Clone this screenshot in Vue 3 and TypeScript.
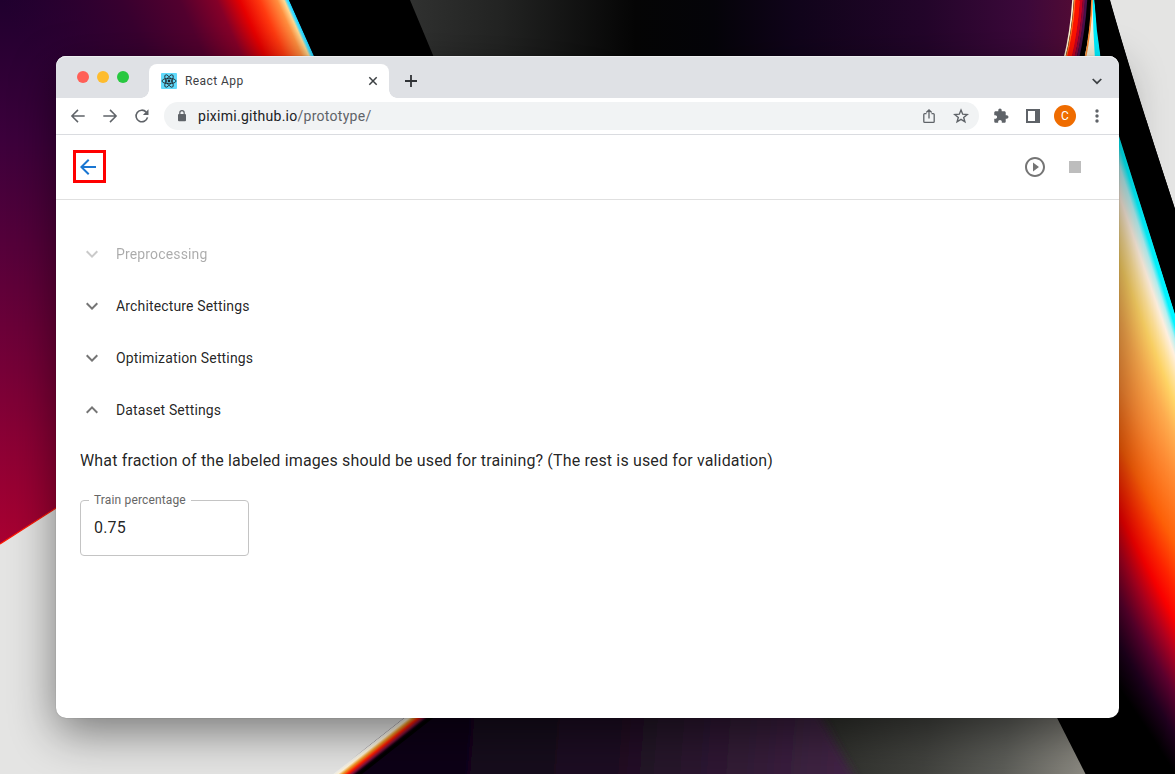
<script setup lang="ts">
interface Section {
  title: string
  open: boolean
  disabled: boolean
}

const sections: Section[] = [
  { title: 'Preprocessing', open: false, disabled: true },
  { title: 'Architecture Settings', open: false, disabled: false },
  { title: 'Optimization Settings', open: false, disabled: false },
  { title: 'Dataset Settings', open: true, disabled: false },
]

// Colour bands of the wallpaper's right-hand glow: [colour, y at the left end, y at the right end]
const glow: [string, number, number][] = [
  ['#000000', 135, 314],
  ['#00f4ff', 137, 316],
  ['#00f4ff', 146, 328],
  ['#b4f0f2', 166, 342],
  ['#fff0e0', 196, 358],
  ['#ffe29a', 230, 382],
  ['#ffd566', 262, 404],
  ['#ffae50', 320, 438],
  ['#ff8c34', 385, 478],
  ['#ff6008', 445, 545],
  ['#ff2200', 490, 590],
  ['#fb0000', 515, 622],
  ['#b00020', 555, 655],
  ['#5c002e', 600, 695],
  ['#20001e', 645, 735],
  ['#000000', 690, 774],
]
const glowLeft = 1110
const strips = Array.from({ length: 65 }, (_, i) => {
  const x = glowLeft + i
  const t = (x - 1119) / 56
  return {
    x,
    stops: glow.map(([color, a, b]) => ({ color, offset: Math.max(0, (a + (b - a) * t) / 774) })),
  }
})
</script>

<template>
  <main class="desktop">
    <svg class="wallpaper" width="1175" height="774" viewBox="0 0 1175 774" aria-hidden="true">
      <defs>
        <linearGradient id="left" x1="0" y1="0" x2="0" y2="1">
          <stop offset="0" stop-color="#20002e" />
          <stop offset=".25" stop-color="#3b003b" />
          <stop offset=".45" stop-color="#55003a" />
          <stop offset=".68" stop-color="#760037" />
          <stop offset="1" stop-color="#a90031" />
        </linearGradient>
        <linearGradient id="flare" gradientUnits="userSpaceOnUse" x1="49" y1="107" x2="288.500" y2="0">
          <stop offset="0" stop-color="#2c0032" stop-opacity="0" />
          <stop offset=".42" stop-color="#38002f" />
          <stop offset=".62" stop-color="#52002e" />
          <stop offset=".75" stop-color="#850028" />
          <stop offset=".83" stop-color="#e60000" />
          <stop offset=".9" stop-color="#ff3b10" />
          <stop offset=".96" stop-color="#ff9040" />
          <stop offset=".984" stop-color="#ffd890" />
          <stop offset=".993" stop-color="#48ddff" />
          <stop offset="1" stop-color="#18d8ff" />
        </linearGradient>
        <linearGradient id="topdark" gradientUnits="userSpaceOnUse" x1="410" y1="0" x2="1072" y2="0">
          <stop offset="0" stop-color="#303130" />
          <stop offset=".14" stop-color="#222322" />
          <stop offset=".34" stop-color="#050505" />
          <stop offset=".46" stop-color="#050409" />
          <stop offset=".58" stop-color="#10041a" />
          <stop offset=".78" stop-color="#23052a" />
          <stop offset=".93" stop-color="#3c083a" />
          <stop offset="1" stop-color="#500b35" />
        </linearGradient>
        <linearGradient id="bottomdark" gradientUnits="userSpaceOnUse" x1="400" y1="740" x2="850" y2="774">
          <stop offset="0" stop-color="#0b0215" />
          <stop offset=".5" stop-color="#201024" />
          <stop offset="1" stop-color="#422546" />
        </linearGradient>
        <linearGradient id="bottomgrey" gradientUnits="userSpaceOnUse" x1="820" y1="730" x2="1085" y2="760">
          <stop offset="0" stop-color="#2c2d29" />
          <stop offset=".4" stop-color="#41423e" />
          <stop offset=".7" stop-color="#5c5d58" />
          <stop offset="1" stop-color="#8b8981" />
        </linearGradient>
        <linearGradient id="seam" gradientUnits="userSpaceOnUse" x1="334" y1="774" x2="343.300" y2="785.800">
          <stop offset="0" stop-color="#f0eee8" />
          <stop offset=".16" stop-color="#fff4d8" />
          <stop offset=".34" stop-color="#f09a28" />
          <stop offset=".55" stop-color="#ff1a00" />
          <stop offset=".74" stop-color="#80103a" />
          <stop offset=".9" stop-color="#10000e" />
          <stop offset="1" stop-color="#000" />
        </linearGradient>
        <linearGradient v-for="s in strips" :id="`glow${s.x}`" :key="s.x" gradientUnits="userSpaceOnUse" x1="0" y1="0" x2="0" y2="774">
          <stop v-for="(p, i) in s.stops" :key="i" :offset="p.offset" :stop-color="p.color" />
        </linearGradient>
        <filter id="soft" x="-10%" y="-10%" width="120%" height="120%"><feGaussianBlur stdDeviation="4" /></filter>
      </defs>
      <rect width="1175" height="774" fill="#e4e4e3" />
      <path d="M0 0H330V390L0 544Z" fill="url(#left)" />
      <path d="M0 0H289L336.300 106H0Z" fill="url(#flare)" />
      <path d="M289 0H1110Q1131 75 1175 209V774H335L560 594L336.300 106Z" fill="#000" />
      <path d="M410 0H1073Q1071 32 1064 60H435Z" fill="url(#topdark)" />
      <g fill="none">
        <path d="M1073 0Q1071 32 1064 60" stroke="#fff2cf" stroke-width="1.600" />
        <path d="M1075 0Q1073 32 1066 60" stroke="#ff6a20" stroke-width="2" />
        <path d="M1078 0Q1076 32 1069 60" stroke="#ff1400" stroke-width="5" />
        <path d="M1081.500 0Q1079.500 32 1072.500 60" stroke="#c80020" stroke-width="3" />
        <path d="M1084 0Q1082 32 1075 60" stroke="#85083c" stroke-width="2.500" />
        <path d="M1086 0Q1084 32 1077.500 60" stroke="#48104a" stroke-width="2.500" />
      </g>
      <path d="M1092 0Q1091 30 1084 60H1101Q1096 30 1094.500 0Z" fill="#00efff" />
      <path d="M1092 0Q1091 30 1084 60H1095Q1093 30 1092.500 0Z" fill="#f5efd8" />
      <path d="M1092 0Q1091 30 1085 60" fill="none" stroke="#ff8a30" stroke-width="1.600" />
      <rect v-for="s in strips" :key="s.x" :x="s.x" y="120" width="1" height="654" :fill="`url(#glow${s.x})`" shape-rendering="crispEdges" />
      <path d="M1110 0Q1131 75 1175 209V0Z" fill="#e4e4e3" />
      <path d="M1110 0Q1131 75 1175 209V314L1119 136L1101 60L1094.500 0Z" fill="#000" />
      <path d="M790 700H1048L1085.500 774H790Z" fill="url(#bottomgrey)" />
      <path d="M380 690H806L858 784H350Z" fill="url(#bottomdark)" filter="url(#soft)" />
      <path d="M427 700L333 774H362L456 700Z" fill="url(#seam)" />
      <path d="M0 544L56 508V700H427L333 774H0Z" fill="#e4e4e3" />
      <path d="M0 544L57 507.500" fill="none" stroke="#ff1800" stroke-width="1.200" />
    </svg>

    <div class="window">
      <header class="tabstrip">
        <div class="lights"><i class="red"></i><i class="amber"></i><i class="green"></i></div>
        <div class="tab">
          <svg class="favicon" width="16" height="16" viewBox="0 0 16 16">
            <rect width="16" height="16" rx="1" fill="#61dafb" />
            <g fill="none" stroke="#20262b" stroke-width=".85">
              <ellipse cx="8" cy="8" rx="7" ry="2.700" />
              <ellipse cx="8" cy="8" rx="7" ry="2.700" transform="rotate(60 8 8)" />
              <ellipse cx="8" cy="8" rx="7" ry="2.700" transform="rotate(120 8 8)" />
            </g>
            <circle cx="8" cy="8" r="1.400" fill="#20262b" />
          </svg>
          <span class="tab-title">React App</span>
          <svg width="16" height="16" viewBox="0 0 16 16"><path d="M4.300 4.300L11.700 11.700M11.700 4.300L4.300 11.700" fill="none" stroke="#3c4043" stroke-width="1.500" /></svg>
        </div>
        <svg class="plus" width="16" height="16" viewBox="0 0 16 16"><path d="M8 2V14M2 8H14" stroke="#303236" stroke-width="1.800" /></svg>
        <svg class="tabs-menu" width="16" height="16" viewBox="0 0 16 16"><path d="M3.700 6L8 10.200L12.300 6" fill="none" stroke="#3c4043" stroke-width="1.700" /></svg>
      </header>

      <div class="toolbar">
        <svg width="16" height="16" viewBox="0 0 16 16"><path d="M14.700 8H2M8 1.900L1.900 8L8 14.100" fill="none" stroke="#5f6368" stroke-width="1.500" /></svg>
        <svg width="16" height="16" viewBox="0 0 16 16"><path d="M1.300 8H14M8 1.900L14.100 8L8 14.100" fill="none" stroke="#5f6368" stroke-width="1.500" /></svg>
        <svg width="16" height="16" viewBox="0 0 16 16"><path d="M13.500 9.400A5.800 5.800 0 1 1 12.200 4.100" fill="none" stroke="#5f6368" stroke-width="1.600" /><path d="M14.500 1.300V6.900H8.900Z" fill="#5f6368" /></svg>
        <div class="omnibox">
          <svg class="lock" width="12" height="14" viewBox="0 0 12 14"><rect x="2" y="5" width="8" height="7.300" rx="1" fill="#5f6368" /><path d="M3.800 5.500V3.900A2.200 2.200 0 0 1 8.200 3.900V5.500" fill="none" stroke="#5f6368" stroke-width="1.200" /></svg>
          <span class="url">piximi.github.io<span>/prototype/</span></span>
          <svg class="share" width="16" height="16" viewBox="0 0 16 16"><path d="M5.500 5.700H3.700Q2.800 5.700 2.800 6.600V13.500Q2.800 14.400 3.700 14.400H12.300Q13.200 14.400 13.200 13.500V6.600Q13.200 5.700 12.300 5.700H10.500M8 10.500V2M5.300 4.500L8 1.800L10.700 4.500" fill="none" stroke="#5f6368" stroke-width="1.300" /></svg>
          <svg width="16" height="16" viewBox="0 0 16 16"><path d="M8 2L9.700 6.200L14.200 6.500L10.700 9.400L11.900 13.800L8 11.400L4.100 13.800L5.300 9.400L1.800 6.500L6.300 6.200Z" fill="none" stroke="#5f6368" stroke-width="1.400" /></svg>
        </div>
        <svg class="puzzle" width="18" height="18" viewBox="0 0 24 24"><path transform="translate(1.200 1.200) scale(.9)" fill="#5f6368" d="M20.500 11H19V7c0-1.100-.9-2-2-2h-4V3.500C13 2.120 11.880 1 10.500 1S8 2.120 8 3.500V5H4c-1.100 0-1.990.9-1.990 2v3.800H3.500c1.490 0 2.700 1.210 2.700 2.700s-1.210 2.700-2.700 2.700H2V20c0 1.100.9 2 2 2h3.800v-1.500c0-1.490 1.210-2.700 2.700-2.700 1.490 0 2.700 1.210 2.700 2.700V22H17c1.100 0 2-.9 2-2v-4h1.500c1.380 0 2.500-1.120 2.500-2.500S21.880 11 20.500 11z" /></svg>
        <svg class="panel" width="14" height="14" viewBox="0 0 14 14"><path d="M0 0H14V14H0ZM2 2V12H9V2Z" fill="#5f6368" fill-rule="evenodd" /></svg>
        <span class="avatar">C</span>
        <svg class="kebab" width="4" height="16" viewBox="0 0 4 16"><g fill="#5f6368"><circle cx="2" cy="3" r="1.700" /><circle cx="2" cy="8" r="1.700" /><circle cx="2" cy="13" r="1.700" /></g></svg>
      </div>

      <nav class="appbar">
        <button class="back" aria-label="Back">
          <svg width="24" height="24" viewBox="0 0 24 24"><path fill="#1976d2" d="M20 11H7.830l5.590-5.590L12 4l-8 8 8 8 1.410-1.410L7.830 13H20v-2z" /></svg>
        </button>
        <svg class="play" width="24" height="24" viewBox="0 0 24 24"><path fill="#757575" d="M10 16.500l6-4.500-6-4.500v9zM12 2C6.480 2 2 6.480 2 12s4.480 10 10 10 10-4.480 10-10S17.520 2 12 2zm0 18c-4.410 0-8-3.590-8-8s3.590-8 8-8 8 3.590 8 8-3.590 8-8 8z" /></svg>
        <svg width="24" height="24" viewBox="0 0 24 24"><path fill="#bdbdbd" d="M6 6h12v12H6z" /></svg>
      </nav>

      <section class="content">
        <div v-for="s in sections" :key="s.title" class="row" :class="{ disabled: s.disabled }">
          <svg width="24" height="24" viewBox="0 0 24 24">
            <path v-if="s.open" fill="#757575" d="M12 8l-6 6 1.410 1.410L12 10.830l4.590 4.580L18 14z" />
            <path v-else fill="#757575" d="M16.590 8.590L12 13.170 7.410 8.590 6 10l6 6 6-6z" />
          </svg>
          <span>{{ s.title }}</span>
        </div>
        <p class="question">What fraction of the labeled images should be used for training? (The rest is used for validation)</p>
        <fieldset class="field">
          <legend>Train percentage</legend>
          <span>0.75</span>
        </fieldset>
      </section>
    </div>
  </main>
</template>

<style>
body {
  margin: 0;
  overflow: hidden;
}
</style>

<style scoped>
.desktop {
  position: relative;
  box-sizing: border-box;
  width: 1175px;
  height: 774px;
  padding: 56px;
  overflow: hidden;
  font-family: Roboto, "Liberation Sans", sans-serif;
}
.wallpaper {
  position: absolute;
  inset: 0;
}
svg {
  display: block;
  flex: none;
}
.window {
  position: relative;
  width: 1063px;
  height: 662px;
  border-radius: 10px;
  background: #fff;
  box-shadow: 0 0 1px rgba(0, 0, 0, 0.4), 0 14px 46px rgba(0, 0, 0, 0.48);
}
.tabstrip {
  display: flex;
  align-items: center;
  box-sizing: border-box;
  height: 42px;
  padding: 0 14px 0 21px;
  border-radius: 10px 10px 0 0;
  background: #dfe1e5;
  box-shadow: inset 0 1px #eeeff1;
}
.lights {
  display: flex;
  gap: 8px;
  width: 72px;
}
.lights i {
  width: 12px;
  height: 12px;
  border-radius: 50%;
}
.red {
  background: #ff5f57;
}
.amber {
  background: #febc2e;
}
.green {
  background: #28c840;
}
.tab {
  position: relative;
  display: flex;
  align-items: center;
  box-sizing: border-box;
  width: 240px;
  height: 34px;
  margin-top: 8px;
  padding: 0 8px 0 12px;
  border-radius: 8px 8px 0 0;
  background: #fff;
}
.tab::before,
.tab::after {
  content: "";
  position: absolute;
  bottom: 0;
  width: 8px;
  height: 8px;
}
.tab::before {
  left: -8px;
  background: radial-gradient(circle at 0 0, transparent 7.5px, #fff 8px);
}
.tab::after {
  right: -8px;
  background: radial-gradient(circle at 100% 0, transparent 7.5px, #fff 8px);
}
.tab-title {
  flex: 1;
  margin-left: 8px;
  font-size: 12px;
  letter-spacing: 0.42px;
  color: #3c4043;
}
.plus {
  margin: 8px 0 0 14px;
}
.tabs-menu {
  margin: 8px 0 0 auto;
}
.toolbar {
  display: flex;
  align-items: center;
  gap: 16px;
  box-sizing: border-box;
  height: 37px;
  padding: 0 20px 0 14px;
  border-bottom: 1px solid #dadce0;
}
.omnibox {
  display: flex;
  flex: 1;
  align-items: center;
  height: 28px;
  margin-left: -2px;
  padding: 0 10px 0 12px;
  border-radius: 14px;
  background: #f1f3f4;
}
.url {
  margin-left: 10px;
  font-size: 14px;
  letter-spacing: 0.27px;
  color: #202124;
}
.url span {
  color: #5f6368;
}
.share {
  margin: 0 16px 0 auto;
}
.puzzle {
  margin-left: -3px;
}
.avatar {
  width: 22px;
  margin: 0 3px 0 -2px;
  border-radius: 50%;
  background: #ef6c00;
  color: #fff;
  font-size: 12px;
  line-height: 22px;
  text-align: center;
}
.appbar {
  display: flex;
  align-items: center;
  gap: 16px;
  box-sizing: border-box;
  height: 65px;
  padding: 0 32px 1px 17px;
  border-bottom: 1px solid #e0e0e0;
}
.back {
  display: grid;
  place-items: center;
  box-sizing: border-box;
  width: 33px;
  height: 33px;
  margin-right: auto;
  padding: 1px 3px 0 0;
  border: 3px solid #f00;
  background: none;
}
.content {
  padding: 28px 24px;
  color: rgba(0, 0, 0, 0.87);
}
.row {
  display: flex;
  align-items: center;
  gap: 12px;
  height: 52px;
  font-size: 14px;
  letter-spacing: 0.15px;
}
.disabled {
  opacity: 0.38;
}
.question {
  margin: 13px 0 0;
  font-size: 16px;
  line-height: 24px;
  letter-spacing: 0.15px;
}
.field {
  box-sizing: border-box;
  width: 169px;
  height: 62px;
  margin: 21px 0 0;
  padding: 12px 13px;
  border: 1px solid #c4c4c4;
  border-radius: 4px;
  font-size: 16px;
  letter-spacing: 0.15px;
}
.field legend {
  margin-left: -5px;
  padding: 0 5px;
  color: #666;
  font-size: 12px;
  line-height: 12px;
}
</style>
